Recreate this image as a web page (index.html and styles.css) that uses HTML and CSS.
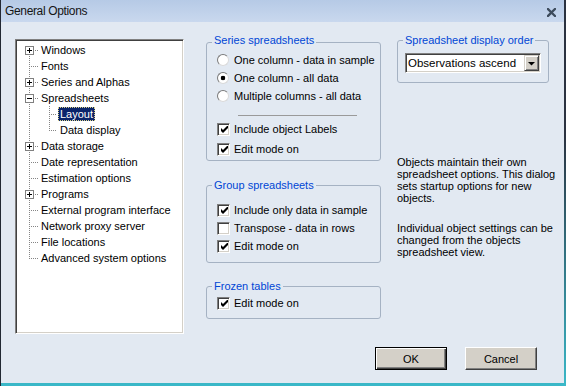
FILE: index.html
```html
<!DOCTYPE html>
<html lang="en">
<head>
<meta charset="utf-8">
<title>General Options</title>
<link rel="stylesheet" href="styles.css">
</head>
<body>
<div class="window">
  <div class="frame">
    <header class="titlebar">
      <span class="title">General Options</span>
      <svg class="close" width="9" height="9" viewBox="0 0 9 9" aria-label="Close">
        <path d="M1 1 L8 8 M8 1 L1 8" stroke="#3d4b5c" stroke-width="2.3" stroke-linecap="square" fill="none"/>
      </svg>
    </header>

    <main class="content">
      <div class="tree">
        <div class="row"><span class="g first"><span class="exp plus"></span></span><span class="label">Windows</span></div>
        <div class="row"><span class="g mid"></span><span class="label">Fonts</span></div>
        <div class="row"><span class="g mid"><span class="exp plus"></span></span><span class="label">Series and Alphas</span></div>
        <div class="row"><span class="g mid"><span class="exp minus"></span></span><span class="label">Spreadsheets</span></div>
        <div class="row"><span class="g pass"></span><span class="g2 mid"></span><span class="label sel">Layout</span></div>
        <div class="row"><span class="g pass"></span><span class="g2 last"></span><span class="label">Data display</span></div>
        <div class="row"><span class="g mid"><span class="exp plus"></span></span><span class="label">Data storage</span></div>
        <div class="row"><span class="g mid"></span><span class="label">Date representation</span></div>
        <div class="row"><span class="g mid"></span><span class="label">Estimation options</span></div>
        <div class="row"><span class="g mid"><span class="exp plus"></span></span><span class="label">Programs</span></div>
        <div class="row"><span class="g mid"></span><span class="label">External program interface</span></div>
        <div class="row"><span class="g mid"></span><span class="label">Network proxy server</span></div>
        <div class="row"><span class="g mid"></span><span class="label">File locations</span></div>
        <div class="row"><span class="g last"></span><span class="label">Advanced system options</span></div>
      </div>

      <div class="col-mid">
        <fieldset class="group series">
          <legend class="legend-low">Series spreadsheets</legend>
          <div class="gbody series-body">
            <div class="opt"><span class="radio"></span><span>One column - data in sample</span></div>
            <div class="opt"><span class="radio on"></span><span>One column - all data</span></div>
            <div class="opt"><span class="radio"></span><span>Multiple columns - all data</span></div>
            <div class="sep"></div>
            <div class="opt tall"><span class="check on"><svg width="7" height="7" viewBox="0 0 7 7"><polygon points="0,2 2,4 7,-1 7,2 2,7 0,5" fill="#000"/></svg></span><span>Include object Labels</span></div>
            <div class="opt tall"><span class="check on"><svg width="7" height="7" viewBox="0 0 7 7"><polygon points="0,2 2,4 7,-1 7,2 2,7 0,5" fill="#000"/></svg></span><span>Edit mode on</span></div>
          </div>
        </fieldset>

        <fieldset class="group grp">
          <legend>Group spreadsheets</legend>
          <div class="gbody grp-body">
            <div class="opt"><span class="check on"><svg width="7" height="7" viewBox="0 0 7 7"><polygon points="0,2 2,4 7,-1 7,2 2,7 0,5" fill="#000"/></svg></span><span>Include only data in sample</span></div>
            <div class="opt"><span class="check"></span><span>Transpose - data in rows</span></div>
            <div class="opt"><span class="check on"><svg width="7" height="7" viewBox="0 0 7 7"><polygon points="0,2 2,4 7,-1 7,2 2,7 0,5" fill="#000"/></svg></span><span>Edit mode on</span></div>
          </div>
        </fieldset>

        <fieldset class="group frozen">
          <legend>Frozen tables</legend>
          <div class="gbody frozen-body">
            <div class="opt"><span class="check on"><svg width="7" height="7" viewBox="0 0 7 7"><polygon points="0,2 2,4 7,-1 7,2 2,7 0,5" fill="#000"/></svg></span><span>Edit mode on</span></div>
          </div>
        </fieldset>
      </div>

      <div class="col-right">
        <fieldset class="group order">
          <legend>Spreadsheet display order</legend>
          <div class="gbody order-body">
            <div class="combo">
              <span class="combo-text">Observations ascend</span>
              <span class="combo-btn"><svg width="7" height="4" viewBox="0 0 7 4"><polygon points="0,0 7,0 3.5,3.6" fill="#000"/></svg></span>
            </div>
          </div>
        </fieldset>
        <p class="info first">Objects maintain their own<br>spreadsheet options. This dialog<br>sets startup options for new<br>objects.</p>
        <p class="info">Individual object settings can be<br>changed from the objects<br>spreadsheet view.</p>
      </div>
    </main>

    <footer class="footer">
      <button class="btn default">OK</button>
      <button class="btn">Cancel</button>
    </footer>
  </div>
</div>
</body>
</html>
```

FILE: styles.css
```css
html, body {
  margin: 0;
  padding: 0;
}
body {
  width: 566px;
  height: 386px;
  overflow: hidden;
  font: 11px "Liberation Sans", Arial, sans-serif;
  color: #000;
}

.window {
  box-sizing: border-box;
  width: 566px;
  height: 386px;
  display: flex;
  border-left: 1px solid #222833;
  padding: 0 2px 3px 0;
  background: linear-gradient(to bottom, #2b3240 0%, #2b3240 35%, #3ab8c8 100%);
}
.frame {
  flex: 1;
  display: flex;
  flex-direction: column;
  background: #e2e9f2;
}

/* title bar */
.titlebar {
  height: 22px;
  flex: none;
  display: flex;
  align-items: center;
  justify-content: space-between;
  padding: 0 8px 0 4px;
  background: linear-gradient(to bottom, #b6cae6, #c9d8ee);
}
.title {
  font-size: 12px;
  letter-spacing: -0.35px;
  color: #141414;
}
.close {
  margin-top: 2px;
}

/* main content */
.content {
  display: flex;
  align-items: flex-start;
  padding: 12px 0 0 14px;
}

/* tree */
.tree {
  --v: repeating-linear-gradient(to bottom, #858585 0 1px, transparent 1px 2px);
  --h: repeating-linear-gradient(to right, #858585 0 1px, transparent 1px 2px);
  box-sizing: border-box;
  width: 169px;
  height: 295px;
  margin-top: 5px;
  padding: 2px 0 0 5px;
  background: #fff;
  border: 1px solid;
  border-color: #808080 #fff #fff #808080;
  box-shadow: inset 1px 1px 0 #404040, inset -1px -1px 0 #d4d0c8;
}
.row {
  display: flex;
  height: 16px;
  align-items: center;
}
.g, .g2 {
  flex: none;
  height: 16px;
  display: flex;
  align-items: flex-start;
  background-repeat: no-repeat;
}
.g { width: 18px; }
.g2 { width: 19px; }
.g.mid {
  background-image: var(--v), var(--h);
  background-size: 1px 16px, 10px 1px;
  background-position: 8px 0, 8px 8px;
}
.g.first {
  background-image: var(--v), var(--h);
  background-size: 1px 8px, 10px 1px;
  background-position: 8px 8px, 8px 8px;
}
.g.last {
  background-image: var(--v), var(--h);
  background-size: 1px 9px, 10px 1px;
  background-position: 8px 0, 8px 8px;
}
.g.pass {
  background-image: var(--v);
  background-size: 1px 16px;
  background-position: 8px 0;
}
.g2.mid {
  background-image: var(--v), var(--h);
  background-size: 1px 16px, 8px 1px;
  background-position: 10px 0, 10px 8px;
}
.g2.last {
  background-image: var(--v), var(--h);
  background-size: 1px 9px, 8px 1px;
  background-position: 10px 0, 10px 8px;
}
.exp {
  box-sizing: border-box;
  width: 9px;
  height: 9px;
  margin: 4px 0 0 4px;
  border: 1px solid #808080;
  background-color: #fff;
  background-repeat: no-repeat;
}
.exp.plus {
  background-image: linear-gradient(#000, #000), linear-gradient(#000, #000);
  background-size: 5px 1px, 1px 5px;
  background-position: 1px 3px, 3px 1px;
}
.exp.minus {
  background-image: linear-gradient(#000, #000);
  background-size: 5px 1px;
  background-position: 1px 3px;
}
.label {
  white-space: nowrap;
  line-height: 12px;
  padding: 0 1px;
  border: 1px solid transparent;
}
.label.sel {
  background: #0a246a;
  color: #fff;
  border: 1px dotted #d8d088;
}

/* middle column */
.col-mid {
  width: 175px;
  margin-left: 22px;
  display: flex;
  flex-direction: column;
}
.group {
  margin: 0;
  padding: 0;
  min-width: 0;
  border: 1px solid #a5b2c3;
  border-radius: 3px;
}
.group legend {
  color: #0046d5;
  line-height: 13px;
  padding: 0 2px;
  margin-left: 5px;
  white-space: nowrap;
}
.group legend.legend-low {
  padding-bottom: 4px;
}
.gbody {
  padding-left: 10px;
}
.series-body { padding-bottom: 1px; }
.grp { margin-top: 18px; }
.grp-body { padding-top: 9px; padding-bottom: 7px; }
.frozen { margin-top: 17px; }
.frozen-body { padding-top: 1px; padding-bottom: 6px; }

.opt {
  display: flex;
  align-items: center;
  height: 18px;
  white-space: nowrap;
}
.opt.tall { height: 20px; }
.opt.tall:first-of-type { margin-top: 0; }
.sep {
  margin: 10px 0 3px 21px;
  width: 119px;
  height: 0;
  border-top: 1px solid #9a9a9a;
}

.radio {
  box-sizing: border-box;
  flex: none;
  width: 12px;
  height: 12px;
  margin-right: 5px;
  border-radius: 50%;
  border: 1px solid;
  border-color: #7a7a7a #dadada #dadada #7a7a7a;
  background: #fff;
}
.radio.on {
  background: radial-gradient(circle at 50% 50%, #000 0 2px, #fff 2.6px);
}
.check {
  box-sizing: border-box;
  flex: none;
  width: 13px;
  height: 13px;
  margin-right: 4px;
  display: flex;
  align-items: center;
  justify-content: center;
  background: #fff;
  border: 1px solid;
  border-color: #808080 #fff #fff #808080;
  box-shadow: inset 1px 1px 0 #404040, inset -1px -1px 0 #d4d0c8;
}
.check svg {
  display: block;
  margin: 1px 0 0 1px;
}

/* right column */
.col-right {
  width: 152px;
  margin-left: 16px;
}
.order-body {
  padding: 6px 0 9px 7px;
}
.combo {
  box-sizing: border-box;
  width: 136px;
  height: 20px;
  display: flex;
  align-items: center;
  padding: 1px 1px 1px 2px;
  background: #fff;
  border: 1px solid;
  border-color: #808080 #fff #fff #808080;
  box-shadow: inset 1px 1px 0 #404040, inset -1px -1px 0 #d4d0c8;
}
.combo-text {
  flex: 1;
  white-space: nowrap;
  font-size: 11.5px;
}
.combo-btn {
  box-sizing: border-box;
  flex: none;
  width: 15px;
  height: 16px;
  display: flex;
  align-items: center;
  justify-content: center;
  background: #d4d0c8;
  border: 1px solid;
  border-color: #d4d0c8 #404040 #404040 #d4d0c8;
  box-shadow: inset 1px 1px 0 #fff, inset -1px -1px 0 #808080;
}
.combo-btn svg { display: block; margin-top: 1px; }

.info {
  margin: 18px 0 0 0;
  line-height: 12px;
  white-space: nowrap;
}
.info.first {
  margin-top: 73px;
}

/* footer */
.footer {
  display: flex;
  justify-content: flex-end;
  gap: 18px;
  padding: 13px 27px 0 0;
}
.btn {
  box-sizing: border-box;
  width: 72px;
  height: 23px;
  padding: 0;
  font: 11px "Liberation Sans", Arial, sans-serif;
  color: #000;
  background: #d4d0c8;
  border: 1px solid;
  border-color: #fff #404040 #404040 #fff;
  box-shadow: inset -1px -1px 0 #808080;
}
.btn.default {
  border: 1px solid #000;
  box-shadow: inset 1px 1px 0 #fff, inset -1px -1px 0 #404040, inset -2px -2px 0 #808080;
}
```
